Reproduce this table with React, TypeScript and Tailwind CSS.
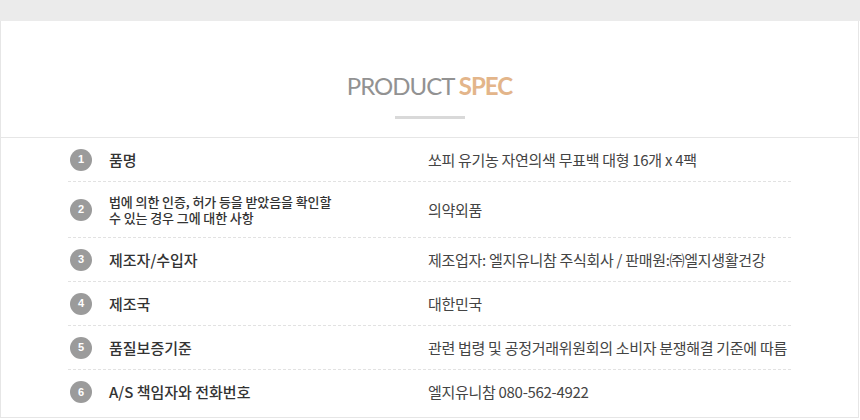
import React from 'react'

type SpecRow = {
  no: number
  label: string[]
  value: string
}

const rows: SpecRow[] = [
  { no: 1, label: ['품명'], value: '쏘피 유기농 자연의색 무표백 대형 16개 x 4팩' },
  {
    no: 2,
    label: ['법에 의한 인증, 허가 등을 받았음을 확인할', '수 있는 경우 그에 대한 사항'],
    value: '의약외품',
  },
  { no: 3, label: ['제조자/수입자'], value: '제조업자: 엘지유니참 주식회사 / 판매원:㈜엘지생활건강' },
  { no: 4, label: ['제조국'], value: '대한민국' },
  { no: 5, label: ['품질보증기준'], value: '관련 법령 및 공정거래위원회의 소비자 분쟁해결 기준에 따름' },
  { no: 6, label: ['A/S 책임자와 전화번호'], value: '엘지유니참 080-562-4922' },
]

const kr = "font-['Noto_Sans_CJK_KR','Noto_Sans',sans-serif]"

const Row = ({ row, last }: { row: SpecRow; last: boolean }) => {
  const multi = row.label.length > 1
  return (
    <div
      className={`flex items-center ${multi ? 'h-[56px]' : 'h-[44px]'} ${
        last ? '' : 'border-b border-dashed border-[#e2e2e2]'
      }`}
    >
      <div className="w-[41px] shrink-0 pl-[2px]">
        <span className="flex h-[22px] w-[22px] items-center justify-center rounded-full bg-[#9b9b9b] text-[11px] font-bold text-white font-['Liberation_Sans',sans-serif]">
          {row.no}
        </span>
      </div>
      <p
        className={`w-[319px] shrink-0 text-[#333] font-medium ${
          multi ? 'text-[13px] leading-4 tracking-[-0.1px]' : 'text-[15px] leading-5'
        }`}
      >
        {row.label.map((line, i) => (
          <React.Fragment key={line}>
            {i > 0 && <br />}
            {line}
          </React.Fragment>
        ))}
      </p>
      <p className="flex-1 text-[15px] leading-5 tracking-[-0.3px] text-[#444]">{row.value}</p>
    </div>
  )
}

export default function App() {
  return (
    <div className={`min-h-[420px] bg-white ${kr}`}>
      <div className="h-[21px] bg-[#ebebeb]" />
      <div className="w-[859px] border-x border-b border-[#e6e6e6]">
        <div className="flex flex-col items-center border-b border-[#e6e6e6] pt-[50px] pb-[18px]">
          <h2 className="text-[24px] leading-[30px] text-[#929292] font-['Lato',sans-serif] tracking-[-1px]">
            PRODUCT <span className="font-bold text-[#e3b58a]">SPEC</span>
          </h2>
          <div className="mt-[15px] h-[3px] w-[70px] bg-[#d9d9d9]" />
        </div>
        <div className="mx-[67px] pb-[3px]">
          {rows.map((row, i) => (
            <Row key={row.no} row={row} last={i === rows.length - 1} />
          ))}
        </div>
      </div>
    </div>
  )
}
